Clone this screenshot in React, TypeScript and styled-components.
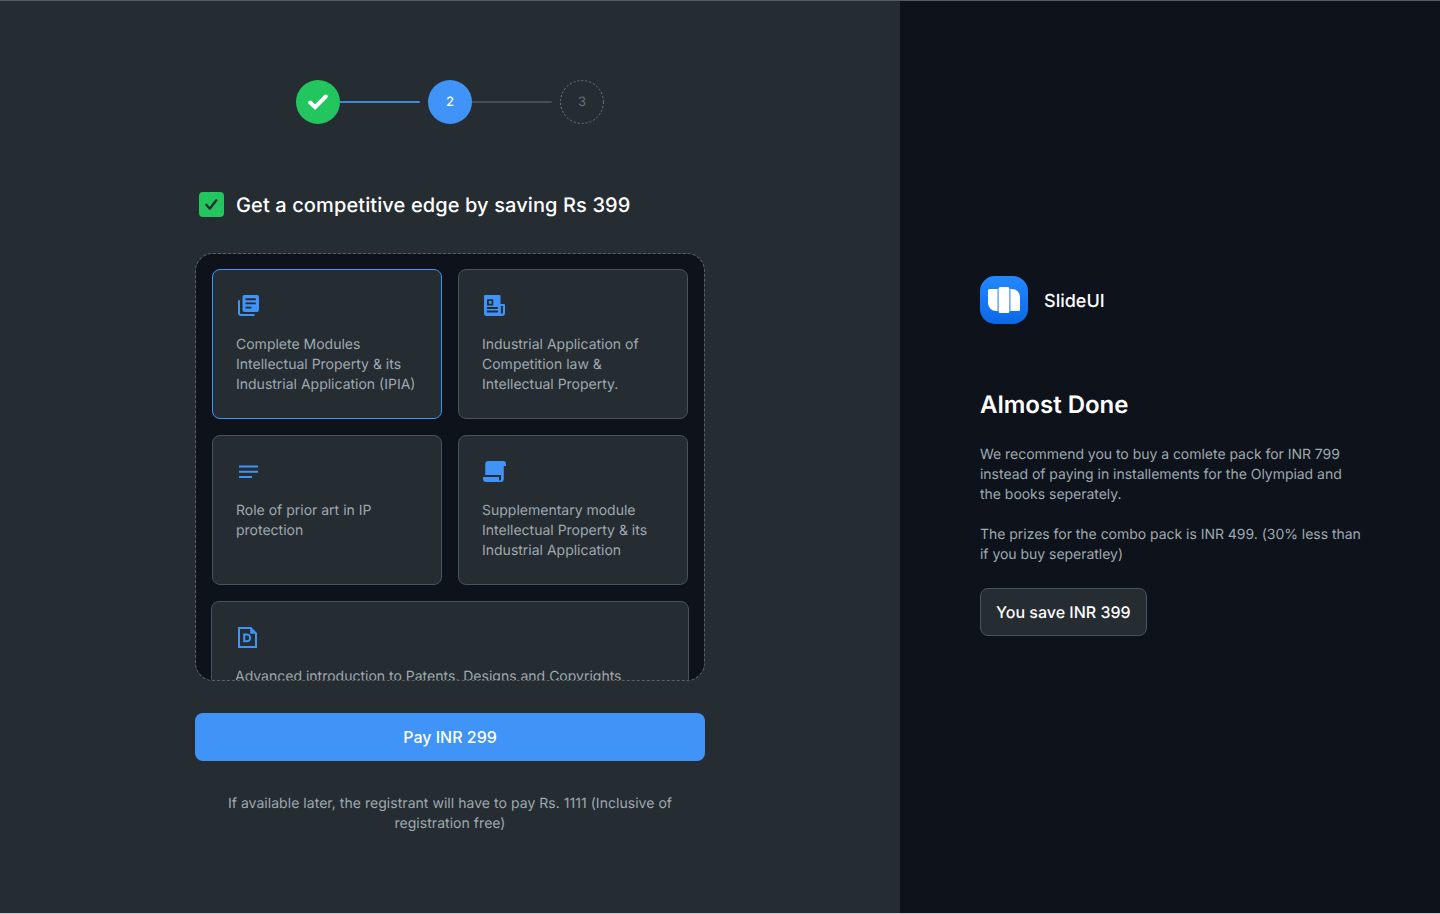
import React from "react";
import styled, { createGlobalStyle } from "styled-components";

const BLUE = "#4094f7";
const SLATE = "#252c32";
const NAVY = "#0d121b";
const LINE = "#48535b";
const MUTED = "#9fa9af";

const GlobalStyle = createGlobalStyle`
  *, *::before, *::after { box-sizing: border-box; }
  body {
    margin: 0;
    background: ${SLATE};
    font-family: Inter, "Liberation Sans", sans-serif;
    -webkit-font-smoothing: antialiased;
    text-rendering: geometricPrecision;
  }
  h1, h2, p { margin: 0; }
`;

const Page = styled.div`
  display: grid;
  grid-template-columns: 900px 540px;
  width: 1440px;
  height: 914px;
  overflow: hidden;
  border-top: 1px solid #525b62;
  border-bottom: 1px solid #c3c8ce;
`;

const Checkout = styled.main`
  display: flex;
  flex-direction: column;
  align-items: center;
  padding-top: 79px;
  background: ${SLATE};
`;

const Stepper = styled.div`
  display: flex;
  align-items: center;
`;

type StepState = "done" | "current" | "upcoming";

const StepCircle = styled.div<{ $state: StepState }>`
  display: flex;
  align-items: center;
  justify-content: center;
  width: 44px;
  height: 44px;
  border-radius: 50%;
  font-size: 13px;
  font-weight: ${({ $state }) => ($state === "upcoming" ? 400 : 500)};
  line-height: 16px;
  color: ${({ $state }) => ($state === "upcoming" ? "#66727a" : "#fff")};
  background: ${({ $state }) =>
    $state === "done" ? "#22c55e" : $state === "current" ? BLUE : "transparent"};
`;

const DashedRing = styled.svg`
  position: absolute;
  inset: 0;
`;

const RingHolder = styled.div`
  position: relative;
`;

const Connector = styled.div<{ $active?: boolean }>`
  width: 80px;
  height: 2px;
  margin-right: 8px;
  border-radius: 0 1px 1px 0;
  background: ${({ $active }) => ($active ? "#3f87de" : "#454e55")};
`;

const Offer = styled.label`
  display: flex;
  align-items: center;
  gap: 12px;
  width: 510px;
  margin-top: 66px;
  padding-left: 4px;
`;

const CheckMark = styled.span`
  display: flex;
  width: 25px;
  height: 25px;
  border-radius: 4px;
  background: #22c55e;
`;

const OfferTitle = styled.h1`
  height: 28px;
  padding-top: 1px;
  font-size: 20px;
  font-weight: 500;
  line-height: 28px;
  letter-spacing: 0.11px;
  color: #fff;
`;

const Modules = styled.section`
  display: grid;
  grid-template-columns: 230px 230px;
  grid-auto-rows: 150px;
  gap: 16px;
  width: 510px;
  height: 428px;
  margin-top: 35px;
  padding: 15px 16px 0;
  overflow: hidden;
  border: 1px dashed #56616a;
  border-radius: 18px;
  background: ${NAVY} padding-box;
`;

const Card = styled.article<{ $selected?: boolean; $wide?: boolean }>`
  display: flex;
  flex-direction: column;
  gap: 16px;
  padding: 23px;
  border: 1px solid ${({ $selected }) => ($selected ? BLUE : LINE)};
  border-radius: 8px;
  background: ${SLATE};
  ${({ $wide }) => $wide && "grid-column: 1 / -1; margin: 0 -1px;"}
`;

const ModuleIcon = styled.svg`
  flex: none;
  width: 26px;
  height: 26px;
  color: ${BLUE};
`;

const Body = styled.p`
  font-size: 14px;
  line-height: 20px;
  color: ${MUTED};
  white-space: pre;
`;

const SummaryText = styled(Body)`
  letter-spacing: -0.03px;
`;

const Footnote = styled(Body)`
  letter-spacing: 0.04px;
  text-align: center;
`;

const PayButton = styled.button`
  width: 510px;
  height: 48px;
  margin: 32px 0 33px;
  border: 0;
  border-radius: 8px;
  background: ${BLUE};
  color: #fff;
  font: 500 16px/24px Inter, sans-serif;
`;

const Summary = styled.aside`
  padding: 275px 60px 0 80px;
  background: ${NAVY};
`;

const Brand = styled.div`
  display: flex;
  align-items: center;
  gap: 16px;
`;

const BrandName = styled.span`
  padding-top: 3px;
  font-size: 18px;
  font-weight: 500;
  line-height: 28px;
  color: #fff;
`;

const Heading = styled.h2`
  margin: 65px 0 24px;
  font-size: 24px;
  font-weight: 600;
  line-height: 32px;
  color: #fff;
`;

const Copy = styled.div`
  display: flex;
  flex-direction: column;
  gap: 20px;
`;

const Saving = styled.div`
  display: inline-flex;
  align-items: center;
  height: 48px;
  margin-top: 23px;
  padding: 0 15px;
  border: 1px solid ${LINE};
  border-radius: 8px;
  background: ${SLATE};
  color: #fff;
  font-size: 16px;
  font-weight: 500;
  line-height: 24px;
`;

const LibraryIcon = () => (
  <ModuleIcon viewBox="0 0 26 26" fill="none">
    <path d="M3 7.200V20a2 2 0 0 0 2 2h13.500" stroke="currentColor" strokeWidth="2" />
    <path fill="currentColor" d="M8.500 2H21a2 2 0 0 1 2 2v13a2 2 0 0 1-2 2H8.500a2 2 0 0 1-2-2V4a2 2 0 0 1 2-2Z" />
    <path d="M9.500 6.200h10.300M9.500 10.400h10.300M9.500 14.600h6" stroke={SLATE} strokeWidth="1.900" />
  </ModuleIcon>
);

const NewsIcon = () => (
  <ModuleIcon viewBox="0 0 26 26" fill="none">
    <path
      fill="currentColor"
      fillRule="evenodd"
      d="M3 2h14.500a1 1 0 0 1 1 1v8H22a1 1 0 0 1 1 1v8a3 3 0 0 1-3 3H4.700A2.700 2.700 0 0 1 2 20.300V3a1 1 0 0 1 1-1ZM18.900 13v6.800a1 1 0 0 0 2 0V13Z"
    />
    <path d="M5.900 7.100h4.500v4.500H5.900Z" stroke={SLATE} strokeWidth="1.800" />
    <path d="M4.900 15h11M4.900 18.500h11" stroke={SLATE} strokeWidth="1.800" />
  </ModuleIcon>
);

const LinesIcon = () => (
  <ModuleIcon viewBox="0 0 26 26" fill="none">
    <path d="M3 7.500h19M3 12.800h19M3 18h13" stroke="currentColor" strokeWidth="2" />
  </ModuleIcon>
);

const ScrollIcon = () => (
  <ModuleIcon viewBox="0 0 26 26" fill="none">
    <path
      fill="currentColor"
      d="M6.500 2H21a3 3 0 0 1 3 3v2h-2.200v13a3 3 0 0 1-3 3H4a3 3 0 0 1-3-3v-2h16v2.500a1 1 0 0 0 2 0V16H3.200V5.300A3.300 3.300 0 0 1 6.500 2Z"
    />
  </ModuleIcon>
);

const DocumentIcon = () => (
  <ModuleIcon viewBox="0 0 26 26" fill="none">
    <path
      fill="currentColor"
      fillRule="evenodd"
      d="M3 2h13l6 6v15H3V2Zm2 2v17h15V8.800h-4.800V4H5Z"
    />
    <path d="M9.200 9.600h2.700a3.300 3.300 0 0 1 0 6.600H9.200Z" stroke="currentColor" strokeWidth="2" />
  </ModuleIcon>
);

const modules = [
  { icon: LibraryIcon, text: "Complete Modules\nIntellectual Property & its\nIndustrial Application (IPIA)", selected: true },
  { icon: NewsIcon, text: "Industrial Application of\nCompetition law &\nIntellectual Property." },
  { icon: LinesIcon, text: "Role of prior art in IP\nprotection" },
  { icon: ScrollIcon, text: "Supplementary module\nIntellectual Property & its\nIndustrial Application" },
  { icon: DocumentIcon, text: "Advanced introduction to Patents, Designs and Copyrights", wide: true },
];

const Logo = () => (
  <svg width="48" height="48" viewBox="0 0 48 48">
    <defs>
      <linearGradient id="brand" x1="0" y1="0" x2="0" y2="1">
        <stop offset="0" stopColor="#2388ff" />
        <stop offset="1" stopColor="#0b68e8" />
      </linearGradient>
    </defs>
    <rect width="48" height="48" rx="15" fill="url(#brand)" />
    <path fill="#fff" d="M9.500 13H17.600v22h-1.600a8 8 0 0 1-8-8V14.500A1.500 1.500 0 0 1 9.500 13ZM30.400 13h1.600a8 8 0 0 1 8 8v12.500a1.500 1.500 0 0 1-1.500 1.500H30.400Z" />
    <rect x="18.600" y="11" width="10.800" height="26" rx="1.500" fill="#fff" />
  </svg>
);

export default function App() {
  return (
    <>
      <GlobalStyle />
      <Page>
        <Checkout>
          <Stepper>
            <StepCircle $state="done">
              <svg width="44" height="44" viewBox="0 0 44 44" fill="none">
                <path d="m14.200 22.500 4.900 4.700L29.800 16.500" stroke="#fff" strokeWidth="4" strokeLinecap="round" strokeLinejoin="miter" />
              </svg>
            </StepCircle>
            <Connector $active />
            <StepCircle $state="current">2</StepCircle>
            <Connector />
            <RingHolder>
              <DashedRing width="44" height="44" viewBox="0 0 44 44" fill="none">
                <circle cx="22" cy="22" r="21.500" stroke="#6e7982" strokeDasharray="2 2" />
              </DashedRing>
              <StepCircle $state="upcoming">3</StepCircle>
            </RingHolder>
          </Stepper>

          <Offer>
            <CheckMark>
              <svg width="25" height="25" viewBox="0 0 25 25" fill="none">
                <path d="m7.300 12.800 3.500 3.900 6.500-8.400" stroke={SLATE} strokeWidth="2.300" strokeLinecap="round" strokeLinejoin="round" />
              </svg>
            </CheckMark>
            <OfferTitle>Get a competitive edge by saving Rs 399</OfferTitle>
          </Offer>

          <Modules>
            {modules.map(({ icon: Icon, text, selected, wide }) => (
              <Card key={text} $selected={selected} $wide={wide}>
                <Icon />
                <Body>{text}</Body>
              </Card>
            ))}
          </Modules>

          <PayButton>Pay INR 299</PayButton>
          <Footnote>{"If available later, the registrant will have to pay Rs. 1111 (Inclusive of\nregistration free)"}</Footnote>
        </Checkout>

        <Summary>
          <Brand>
            <Logo />
            <BrandName>SlideUI</BrandName>
          </Brand>
          <Heading>Almost Done</Heading>
          <Copy>
            <SummaryText>{"We recommend you to buy a comlete pack for INR 799\ninstead of paying in installements for the Olympiad and\nthe books seperately."}</SummaryText>
            <SummaryText>{"The prizes for the combo pack is INR 499. (30% less than\nif you buy seperatley)"}</SummaryText>
          </Copy>
          <Saving>You save INR 399</Saving>
        </Summary>
      </Page>
    </>
  );
}
